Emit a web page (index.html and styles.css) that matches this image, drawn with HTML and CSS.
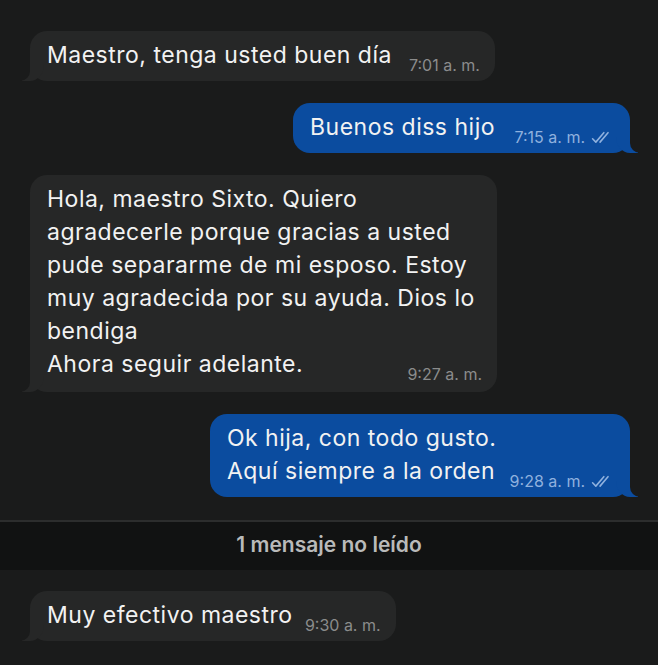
FILE: index.html
```html
<!DOCTYPE html>
<html lang="es">
<head>
    <meta charset="UTF-8">
    <title>Chat</title>
    <link rel="stylesheet" href="styles.css">
</head>
<body>
<div class="chat">
    <!--mensajes antes del aviso-->
    <div class="list">
        <div class="row in">
            <div class="bubble">
                <div class="text">Maestro, tenga usted buen día<span class="spacer"></span></div>
                <div class="meta">7:01 a. m.</div>
            </div>
        </div>
        <div class="row out">
            <div class="bubble">
                <div class="text">Buenos diss hijo<span class="spacer wide"></span></div>
                <div class="meta">7:15 a. m.
                    <svg class="checks" viewBox="0 0 20 12" width="21" height="13">
                        <path d="M1.5 7.2 L4.6 10.4 L12.2 1.4"/>
                        <path d="M8.6 10.4 L16.2 1.4"/>
                    </svg>
                </div>
            </div>
        </div>
        <div class="row in">
            <div class="bubble long">
                <div class="text">Hola, maestro Sixto. Quiero agradecerle porque gracias a usted pude separarme de mi esposo. Estoy muy agradecida por su ayuda. Dios lo bendiga<br>Ahora seguir adelante.<span class="spacer"></span></div>
                <div class="meta">9:27 a. m.</div>
            </div>
        </div>
        <div class="row out">
            <div class="bubble">
                <div class="text">Ok hija, con todo gusto.<br>Aquí siempre a la orden<span class="spacer wide"></span></div>
                <div class="meta">9:28 a. m.
                    <svg class="checks" viewBox="0 0 20 12" width="21" height="13">
                        <path d="M1.5 7.2 L4.6 10.4 L12.2 1.4"/>
                        <path d="M8.6 10.4 L16.2 1.4"/>
                    </svg>
                </div>
            </div>
        </div>
    </div>
    <!--aviso de no leídos-->
    <div class="unread">1 mensaje no leído</div>
    <div class="list">
        <div class="row in">
            <div class="bubble">
                <div class="text">Muy efectivo maestro<span class="spacer"></span></div>
                <div class="meta">9:30 a. m.</div>
            </div>
        </div>
    </div>
</div>
</body>
</html>
```

FILE: styles.css
```css
* {
    margin: 0;
    padding: 0;
    box-sizing: border-box;
}

body {
    background-color: #1a1b1b;
    font-family: Inter, "Noto Sans", sans-serif;
    color: #f2f2f2;
    width: 658px;
    height: 665px;
    overflow: hidden;
}

.chat {
    display: flex;
    flex-direction: column;
    padding-top: 31px;
}

.list {
    display: flex;
    flex-direction: column;
    gap: 22px;
}

.row {
    display: flex;
    padding: 0 28px 0 30px;
}

.row.out {
    justify-content: flex-end;
}

/*气泡*/
.bubble {
    position: relative;
    display: grid;
    max-width: 467px;
    padding: 8px 15px 9px 17px;
    border-radius: 17px;
    background-color: #262727;
}

.bubble.long {
    padding-bottom: 11px;
}

.out .bubble {
    background-color: #0b4c9f;
    padding-right: 18px;
}

/*尾巴*/
.bubble::before,
.bubble::after {
    content: "";
    position: absolute;
    bottom: 0;
    height: 18px;
}

.in .bubble::before {
    left: -8px;
    width: 22px;
    background-color: #262727;
    border-bottom-right-radius: 14px 16px;
}

.in .bubble::after {
    left: -12px;
    width: 12px;
    background-color: #1a1b1b;
    border-bottom-right-radius: 10px;
}

.out .bubble::before {
    right: -8px;
    width: 22px;
    background-color: #0b4c9f;
    border-bottom-left-radius: 14px 16px;
}

.out .bubble::after {
    right: -12px;
    width: 12px;
    background-color: #1a1b1b;
    border-bottom-left-radius: 10px;
}

.text,
.meta {
    grid-area: 1 / 1;
    position: relative;
    z-index: 1;
}

.text {
    font-size: 23px;
    line-height: 33px;
    letter-spacing: 0.5px;
}

.spacer {
    display: inline-block;
    width: 88px;
}

.spacer.wide {
    width: 117px;
}

.meta {
    justify-self: end;
    align-self: end;
    display: flex;
    align-items: center;
    gap: 6px;
    font-size: 16px;
    line-height: 18px;
    margin-bottom: -2px;
    color: #8b8c8c;
    white-space: nowrap;
}

.out .meta {
    color: #8fb1de;
}

.checks {
    fill: none;
    stroke: #8fb1de;
    stroke-width: 1.5;
    stroke-linecap: round;
    stroke-linejoin: round;
}

/*未读提示*/
.unread {
    margin: 23px 0 21px;
    border-top: 2px solid #2c2d2d;
    background-color: #111212;
    height: 50px;
    line-height: 46px;
    text-align: center;
    font-size: 21px;
    font-weight: 600;
    color: #b9baba;
}
```
